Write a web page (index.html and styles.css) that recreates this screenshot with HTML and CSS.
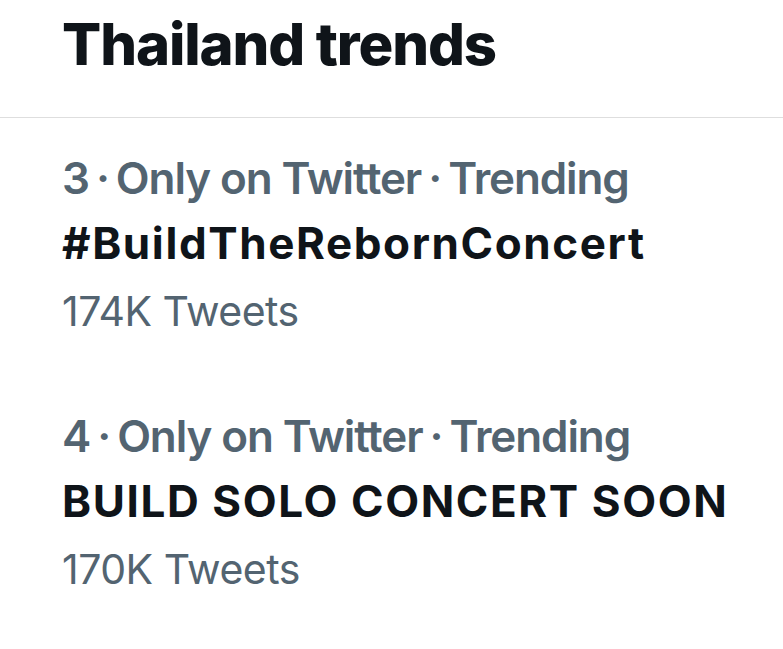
FILE: index.html
```html
<!DOCTYPE html>
<html>
<head>
<meta charset="utf-8">
<link rel="stylesheet" href="styles.css">
</head>
<body>
<div class="page">
  <header class="header"><h1 class="title">Thailand trends</h1></header>
  <ul class="trends">
    <li class="trend">
      <div class="meta">3<span class="dot">·</span>Only on Twitter<span class="dot">·</span>Trending</div>
      <div class="name">#BuildTheRebornConcert</div>
      <div class="count">174K Tweets</div>
    </li>
    <li class="trend">
      <div class="meta">4<span class="dot">·</span>Only on Twitter<span class="dot">·</span>Trending</div>
      <div class="name">BUILD SOLO CONCERT SOON</div>
      <div class="count">170K Tweets</div>
    </li>
  </ul>
</div>
</body>
</html>
```
FILE: styles.css
```css
html, body { margin: 0; padding: 0; background: #fff; }
body { font-family: Inter, "Noto Sans", sans-serif; color: #0f1419; }
.page { width: 783px; }
.header { padding: 8px 0 0 62px; height: 118px; box-sizing: border-box; border-bottom: 1px solid #dedede; }
.title { margin: 0; font-size: 58px; font-weight: 800; line-height: 72px; letter-spacing: -1.1px; }
.trends { list-style: none; margin: 0; padding: 0; }
.trend { padding: 28px 0 30px 62px; }
.meta { color: #536471; font-size: 44px; font-weight: 600; line-height: 65px; letter-spacing: -1.1px; }
.dot { margin: 0 7px; }
.name { color: #0f1419; font-size: 44px; font-weight: 700; line-height: 65px; letter-spacing: 1.6px; }
.count { color: #536471; font-size: 41px; font-weight: 400; line-height: 70px; letter-spacing: -0.5px; }
```
